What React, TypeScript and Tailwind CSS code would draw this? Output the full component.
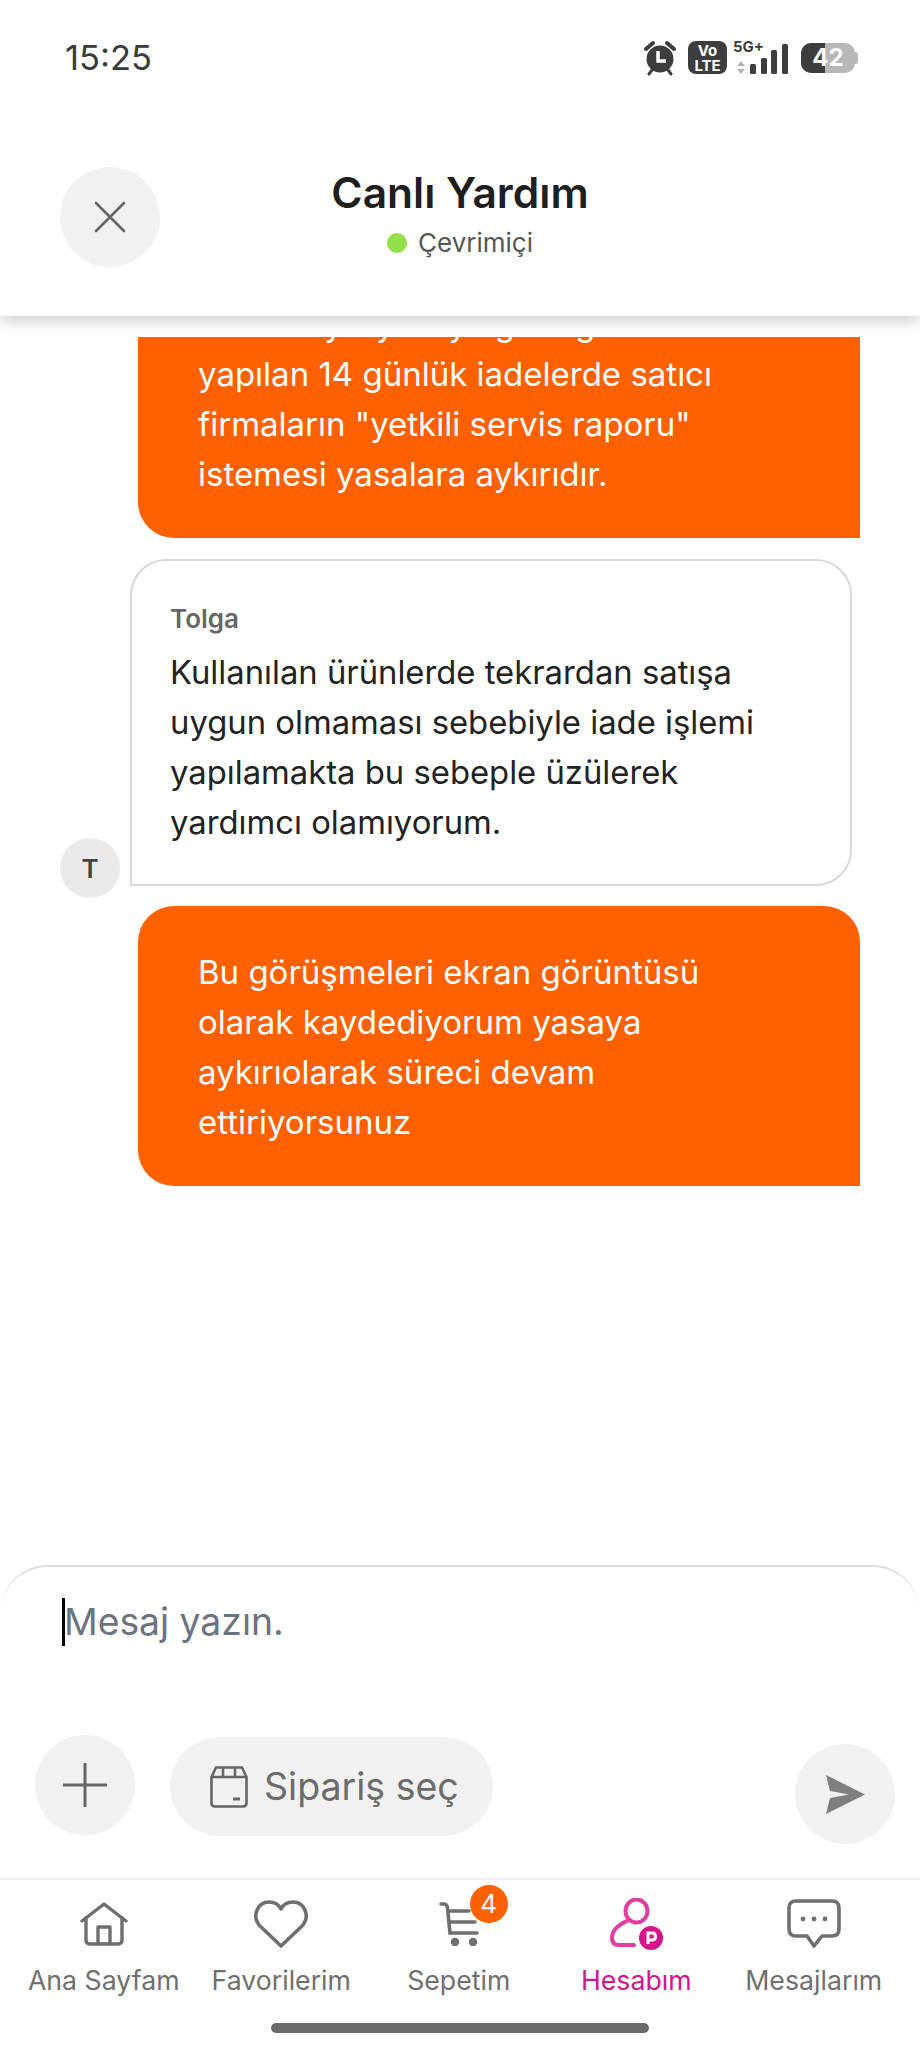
import React from "react";

const font = { fontFamily: "Inter, 'Noto Sans', sans-serif" };

function StatusIcons() {
  return (
    <div className="flex items-center text-[#3d3d3d]">
      <svg width="32" height="36" viewBox="0 0 32 36">
        <circle cx="16" cy="19" r="13.5" fill="#3d3d3d" />
        <path d="M2 9 L9 3 M30 9 L23 3" stroke="#3d3d3d" strokeWidth="4" strokeLinecap="round" />
        <path d="M5 34 L8 30 M27 34 L24 30" stroke="#3d3d3d" strokeWidth="3" strokeLinecap="round" />
        <path d="M14 11 V21 H22" stroke="#fff" strokeWidth="3.4" fill="none" />
      </svg>
      <div className="ml-[12px] flex h-[33px] w-[39px] flex-col items-center justify-center rounded-[8px] bg-[#3d3d3d] text-[15px] font-bold leading-[15px] text-white">
        <span>Vo</span>
        <span>LTE</span>
      </div>
      <div className="relative ml-[6px] h-[36px] w-[55px]">
        <svg width="55" height="36" viewBox="0 0 55 36">
          <path d="M8 21 L12 26 H4 Z M8 34 L12 29 H4 Z" fill="#b5b5b5" />
          <rect x="17" y="24" width="6" height="10" rx="1.5" fill="#3d3d3d" />
          <rect x="28" y="18" width="6" height="16" rx="1.5" fill="#3d3d3d" />
          <rect x="38" y="10" width="6" height="24" rx="1.5" fill="#3d3d3d" />
          <rect x="49" y="4" width="6" height="30" rx="1.5" fill="#3d3d3d" />
        </svg>
        <span className="absolute left-0 top-[-1px] text-[15px] font-bold leading-[16px] text-[#3d3d3d]">5G+</span>
      </div>
      <div className="ml-[13px] flex items-center">
        <div className="relative flex h-[30px] w-[54px] overflow-hidden rounded-[10px] bg-[#b8b8b8]">
          <div className="h-full w-[24px] bg-[#3d3d3d]" />
          <span className="absolute inset-0 flex items-center justify-center text-[24px] font-bold text-white">42</span>
        </div>
        <div className="h-[12px] w-[3px] rounded-r-[3px] bg-[#b8b8b8]" />
      </div>
    </div>
  );
}

function Bubble({ lines, className }: { lines: string[]; className: string }) {
  return (
    <div className={className}>
      {lines.map((l) => (
        <div key={l}>{l}</div>
      ))}
    </div>
  );
}

function NavItem({ label, icon, active }: { label: string; icon: React.ReactNode; active?: boolean }) {
  return (
    <div className="flex flex-col items-center">
      <div className="relative flex h-[54px] items-center justify-center">{icon}</div>
      <span className={`mt-[11px] whitespace-nowrap text-[26.7px] leading-[36px] ${active ? "text-[#d4148c]" : "text-[#6f6f6f]"}`}>{label}</span>
    </div>
  );
}

export default function App() {
  return (
    <div style={font} className="relative flex h-[2048px] w-[920px] flex-col overflow-hidden bg-white">
      <div className="relative z-10 h-[316px] shrink-0 bg-white shadow-[0_6px_14px_rgba(0,0,0,0.18)]">
        <div className="flex items-center justify-between pl-[65px] pr-[62px] pt-[36px]">
          <span className="mt-[1px] text-[34.5px] font-normal leading-[42px] text-[#3a3a3a]">15:25</span>
          <StatusIcons />
        </div>
        <div className="relative mt-[88px] flex flex-col items-center">
          <button className="absolute left-[60px] top-0 flex h-[100px] w-[100px] items-center justify-center rounded-full bg-[#f1f1f1]">
            <svg width="32" height="32" viewBox="0 0 32 32" stroke="#666" strokeWidth="2.6" strokeLinecap="round">
              <path d="M2 2 L30 30 M30 2 L2 30" />
            </svg>
          </button>
          <h1 className="text-[42.5px] font-semibold leading-[52px] text-[#1f1f1f]">Canlı Yardım</h1>
          <div className="mt-[6px] flex items-center gap-[11px] text-[26px] leading-[36px] text-[#555]">
            <span className="h-[20px] w-[20px] rounded-full bg-[#93e04a]" />
            <span>Çevrimiçi</span>
          </div>
        </div>
      </div>

      <div className="flex-1 overflow-hidden pt-[21px]">
        <div className="ml-[138px] h-[201px] w-[722px] overflow-hidden rounded-bl-[36px] bg-[#ff6000]">
          <div className="-mt-[38px] pl-[60px] text-[33px] leading-[50px] text-white">
            <div>6502 sayılı yasaya göre güvence</div>
            <div>yapılan 14 günlük iadelerde satıcı</div>
            <div>firmaların "yetkili servis raporu"</div>
            <div>istemesi yasalara aykırıdır.</div>
          </div>
        </div>

        <div className="mt-[21px] flex items-end">
          <div className="mb-[-12px] ml-[60px] mr-[10px] flex h-[60px] w-[60px] items-center justify-center rounded-full bg-[#e9e9e9] text-[26px] font-semibold text-[#444]">T</div>
          <div className="h-[327px] w-[722px] rounded-[36px] rounded-bl-none border-2 border-[#d8d8d8] px-[38px] pt-[40px]">
            <div className="text-[26px] font-semibold leading-[36px] text-[#666]">Tolga</div>
            <Bubble
              className="mt-[10px] text-[32.8px] leading-[50px] text-[#222]"
              lines={[
                "Kullanılan ürünlerde tekrardan satışa",
                "uygun olmaması sebebiyle iade işlemi",
                "yapılamakta bu sebeple üzülerek",
                "yardımcı olamıyorum.",
              ]}
            />
          </div>
        </div>

        <Bubble
          className="ml-[138px] mt-[20px] h-[280px] w-[722px] rounded-[36px] rounded-br-none bg-[#ff6000] pl-[60px] pt-[41px] text-[33px] leading-[50px] text-white"
          lines={["Bu görüşmeleri ekran görüntüsü", "olarak kaydediyorum yasaya", "aykırıolarak süreci devam", "ettiriyorsunuz"]}
        />
      </div>

      <div className="h-[313px] shrink-0 rounded-t-[48px] border-t-2 border-[#dcdcdc]">
        <div className="flex items-center pl-[62px] pt-[30px]">
          <span className="h-[48px] w-[3px] bg-black" />
          <span className="-ml-[1px] text-[37.3px] leading-[50px] text-[#6b7280]">Mesaj yazın.</span>
        </div>
        <div className="relative mt-[88px] flex items-start pl-[35px]">
          <div className="flex h-[100px] w-[100px] items-center justify-center rounded-full bg-[#f1f1f1]">
            <svg width="46" height="46" viewBox="0 0 46 46" stroke="#666" strokeWidth="3">
              <path d="M23 1 V45 M1 23 H45" />
            </svg>
          </div>
          <div className="ml-[35px] mt-[2px] flex h-[99px] w-[323px] items-center gap-[16px] rounded-full bg-[#f1f1f1] pl-[40px]">
            <svg width="38" height="42" viewBox="0 0 38 42" fill="none" stroke="#666" strokeWidth="2.6">
              <path d="M1.5 11 V37 Q1.5 40.5 5 40.5 H33 Q36.5 40.5 36.5 37 V11 L32 1.5 H6 Z" strokeLinejoin="round" />
              <path d="M1.5 11 H36.5 M13 1.5 V11 M25 1.5 V11" />
              <path d="M23 33 H30" strokeWidth="3" />
            </svg>
            <span className="text-[37.5px] leading-[50px] text-[#6b6b6b]">Sipariş seç</span>
          </div>
          <div className="absolute right-[25px] top-[9px] flex h-[100px] w-[100px] items-center justify-center rounded-full bg-[#f1f1f1]">
            <svg width="40" height="39" viewBox="0 0 40 39" fill="#7f7f7f">
              <path d="M1 0 L40 19.5 L1 39 L5 23 L24 19.5 L5 16 Z" />
            </svg>
          </div>
        </div>
      </div>

      <div className="h-[170px] shrink-0 border-t-2 border-[#f0f0f0]">
        <div className="grid grid-cols-[repeat(5,177.5px)] pl-[15px] pt-[17px]">
          <NavItem
            label="Ana Sayfam"
            icon={
              <svg width="48" height="44" viewBox="0 0 48 44" fill="none" stroke="#6f6f6f" strokeWidth="3.4" strokeLinejoin="round" strokeLinecap="round">
                <path d="M2 19 L24 2 L46 19" />
                <path d="M6 16 V38 Q6 42 10 42 H38 Q42 42 42 38 V16" />
                <path d="M18 42 V25 H30 V42" />
              </svg>
            }
          />
          <NavItem
            label="Favorilerim"
            icon={
              <svg width="54" height="48" viewBox="0 0 54 48" fill="none" stroke="#6f6f6f" strokeWidth="3.6" strokeLinejoin="round">
                <path d="M27 46 L6 26 C-3 16 4 2 15 2 C21 2 25 5 27 9 C29 5 33 2 39 2 C50 2 57 16 48 26 Z" />
              </svg>
            }
          />
          <NavItem
            label="Sepetim"
            icon={
              <div className="relative">
                <svg width="40" height="44" viewBox="0 0 40 44" fill="none" stroke="#6f6f6f" strokeWidth="3.6" strokeLinecap="round">
                  <path d="M2 2 H5 Q8 2 8.5 6 L11 31 H38" />
                  <path d="M9 9 H30 M10 20 H36" />
                  <circle cx="16" cy="40" r="2.4" fill="#6f6f6f" />
                  <circle cx="34" cy="40" r="2.4" fill="#6f6f6f" />
                </svg>
                <span className="absolute left-[31px] top-[-17px] flex h-[38px] w-[38px] items-center justify-center rounded-full bg-[#ff6000] text-[26px] leading-none text-white">4</span>
              </div>
            }
          />
          <NavItem
            active
            label="Hesabım"
            icon={
              <svg width="53" height="52" viewBox="0 0 53 52" fill="none">
                <ellipse cx="26.5" cy="13" rx="11" ry="11.5" stroke="#df3fa0" strokeWidth="4" />
                <path d="M17 23 C8 27 2 33 2 40 Q2 47 9 47 H24" stroke="#df3fa0" strokeWidth="4" strokeLinecap="round" />
                <circle cx="41" cy="40" r="12" fill="#d4148c" />
                <path d="M38 46 V35 H42 Q45.5 35 45.5 38.5 Q45.5 42 42 42 H38" stroke="#fff" strokeWidth="3" />
              </svg>
            }
          />
          <NavItem
            label="Mesajlarım"
            icon={
              <svg width="54" height="50" viewBox="0 0 54 50" fill="none" stroke="#6f6f6f" strokeWidth="3.6" strokeLinejoin="round">
                <path d="M9 2 H45 Q52 2 52 9 V30 Q52 37 45 37 H35 L27 47 L20 37 H9 Q2 37 2 30 V9 Q2 2 9 2 Z" />
                <circle cx="16" cy="20" r="2.4" fill="#6f6f6f" stroke="none" />
                <circle cx="27" cy="20" r="2.4" fill="#6f6f6f" stroke="none" />
                <circle cx="38" cy="20" r="2.4" fill="#6f6f6f" stroke="none" />
              </svg>
            }
          />
        </div>
        <div className="mx-auto mt-[25px] h-[10px] w-[378px] rounded-full bg-[#6b6b6b]" />
      </div>
    </div>
  );
}
